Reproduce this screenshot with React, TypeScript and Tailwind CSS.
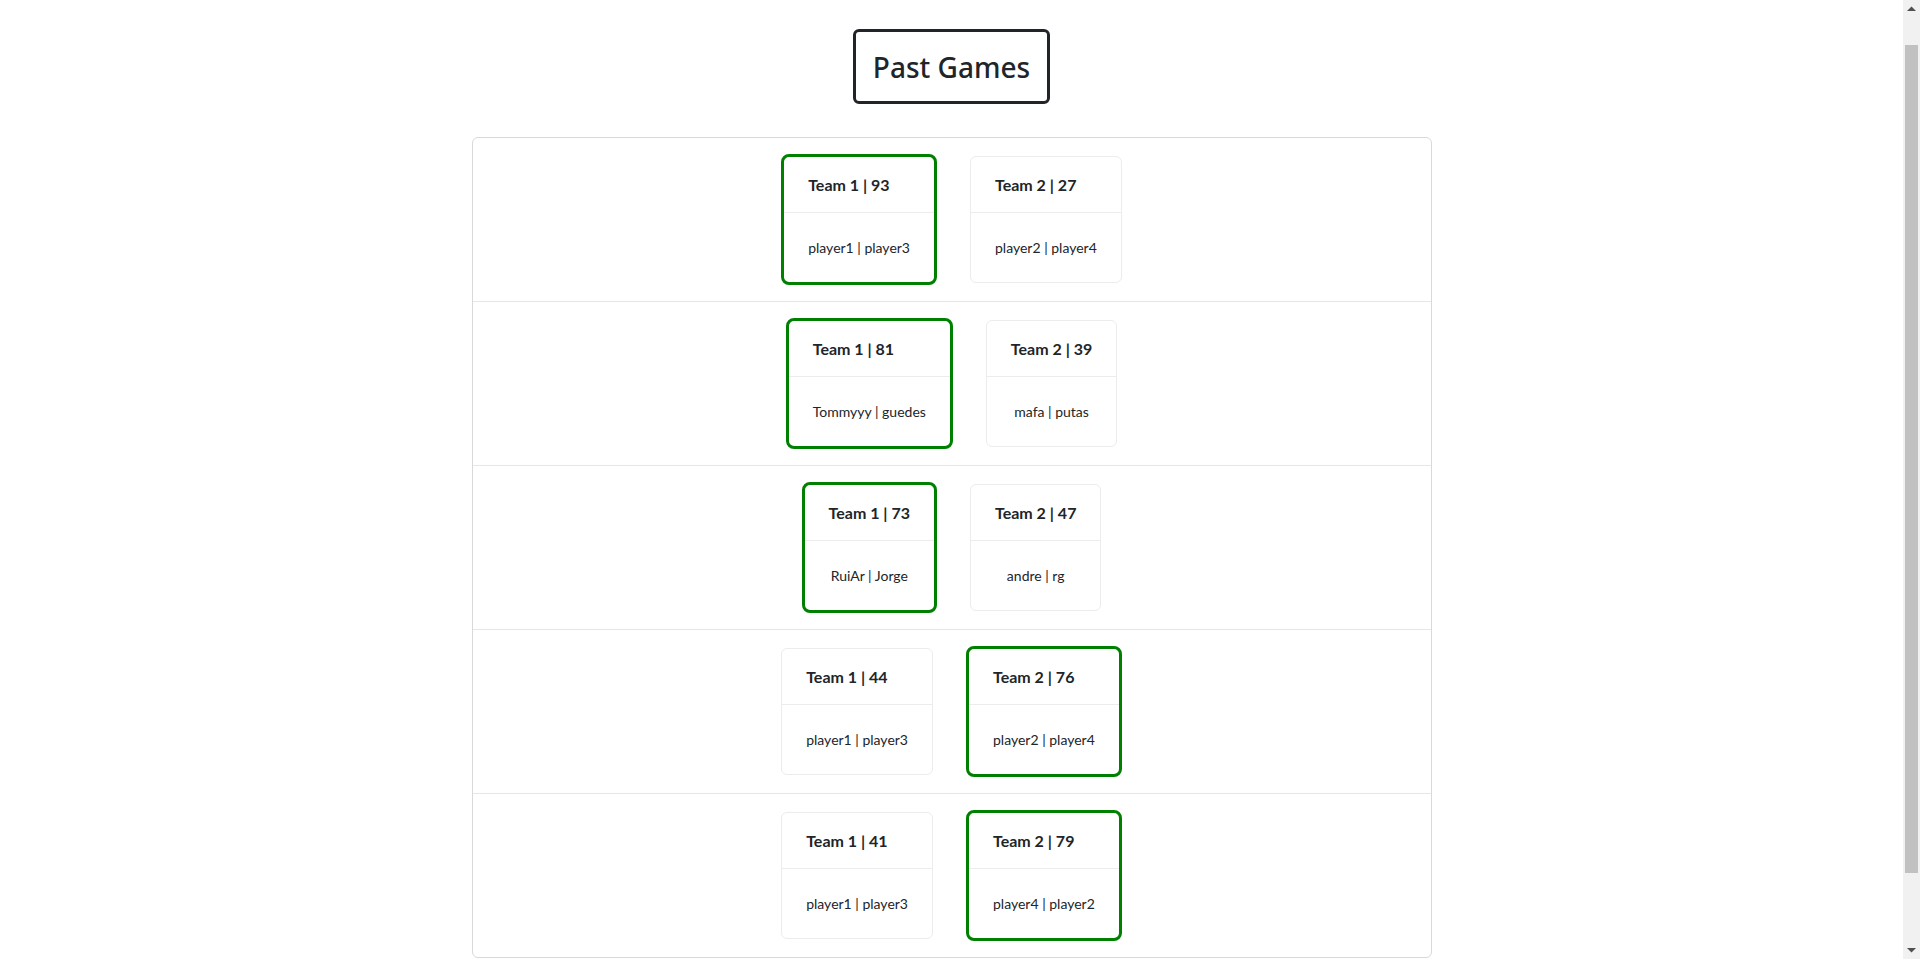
import React from "react";

type Team = { name: string; score: number; players: string; winner: boolean };
type Game = { t1: Team; t2: Team };

const games: Game[] = [
  {
    t1: { name: "Team 1", score: 93, players: "player1 | player3", winner: true },
    t2: { name: "Team 2", score: 27, players: "player2 | player4", winner: false },
  },
  {
    t1: { name: "Team 1", score: 81, players: "Tommyyy | guedes", winner: true },
    t2: { name: "Team 2", score: 39, players: "mafa | putas", winner: false },
  },
  {
    t1: { name: "Team 1", score: 73, players: "RuiAr | Jorge", winner: true },
    t2: { name: "Team 2", score: 47, players: "andre | rg", winner: false },
  },
  {
    t1: { name: "Team 1", score: 44, players: "player1 | player3", winner: false },
    t2: { name: "Team 2", score: 76, players: "player2 | player4", winner: true },
  },
  {
    t1: { name: "Team 1", score: 41, players: "player1 | player3", winner: false },
    t2: { name: "Team 2", score: 79, players: "player4 | player2", winner: true },
  },
];

function TeamCard({ team }: { team: Team }) {
  return (
    <div
      className={
        team.winner
          ? "flex flex-col rounded-[8px] border-[3px] border-[#008000] bg-white"
          : "flex flex-col rounded-[6px] border border-[#ececec] bg-white"
      }
    >
      <div className="border-b border-[#ececec] px-6 py-4 text-left text-[16px] font-bold leading-[23px] text-[#212529]">
        {team.name} | {team.score}
      </div>
      <div className="px-6 py-6 text-center text-[14px] leading-[21px] text-[#212529]">
        {team.players}
      </div>
    </div>
  );
}

function Scrollbar() {
  return (
    <div className="flex h-screen w-[17px] shrink-0 flex-col bg-[#f1f1f1]">
      <div className="flex h-[17px] items-center justify-center">
        <svg width="9" height="5" viewBox="0 0 9 5">
          <path d="M0 5 L4.5 0.5 L9 5 Z" fill="#505050" />
        </svg>
      </div>
      <div className="h-[28px]" />
      <div className="mx-[2px] h-[828px] bg-[#c1c1c1]" />
      <div className="flex-1" />
      <div className="flex h-[17px] items-center justify-center">
        <svg width="9" height="5" viewBox="0 0 9 5">
          <path d="M0 0 L4.5 4.5 L9 0 Z" fill="#505050" />
        </svg>
      </div>
    </div>
  );
}

export default function App() {
  return (
    <div className="flex h-screen overflow-hidden bg-white font-['Lato','Noto_Sans',sans-serif] text-[#212529]">
      <main className="min-w-0 flex-1">
        <div className="flex justify-center pt-[29px]">
          <h3 className="rounded-[6px] border-[3px] border-[#212529] px-[17px] pt-[18px] pb-[17px] font-['Noto_Sans',sans-serif] text-[28px] font-medium leading-[34px] text-[#212529]">
            Past Games
          </h3>
        </div>
        <div className="mx-auto mt-[33px] w-[960px] rounded-[6px] border border-[#d9d9d9]">
          {games.map((g, i) => (
            <div
              key={i}
              className={
                "flex items-center justify-center gap-[33px] py-4" +
                (i < games.length - 1 ? " border-b border-[#e6e6e6]" : "")
              }
            >
              <TeamCard team={g.t1} />
              <TeamCard team={g.t2} />
            </div>
          ))}
        </div>
      </main>
      <Scrollbar />
    </div>
  );
}
